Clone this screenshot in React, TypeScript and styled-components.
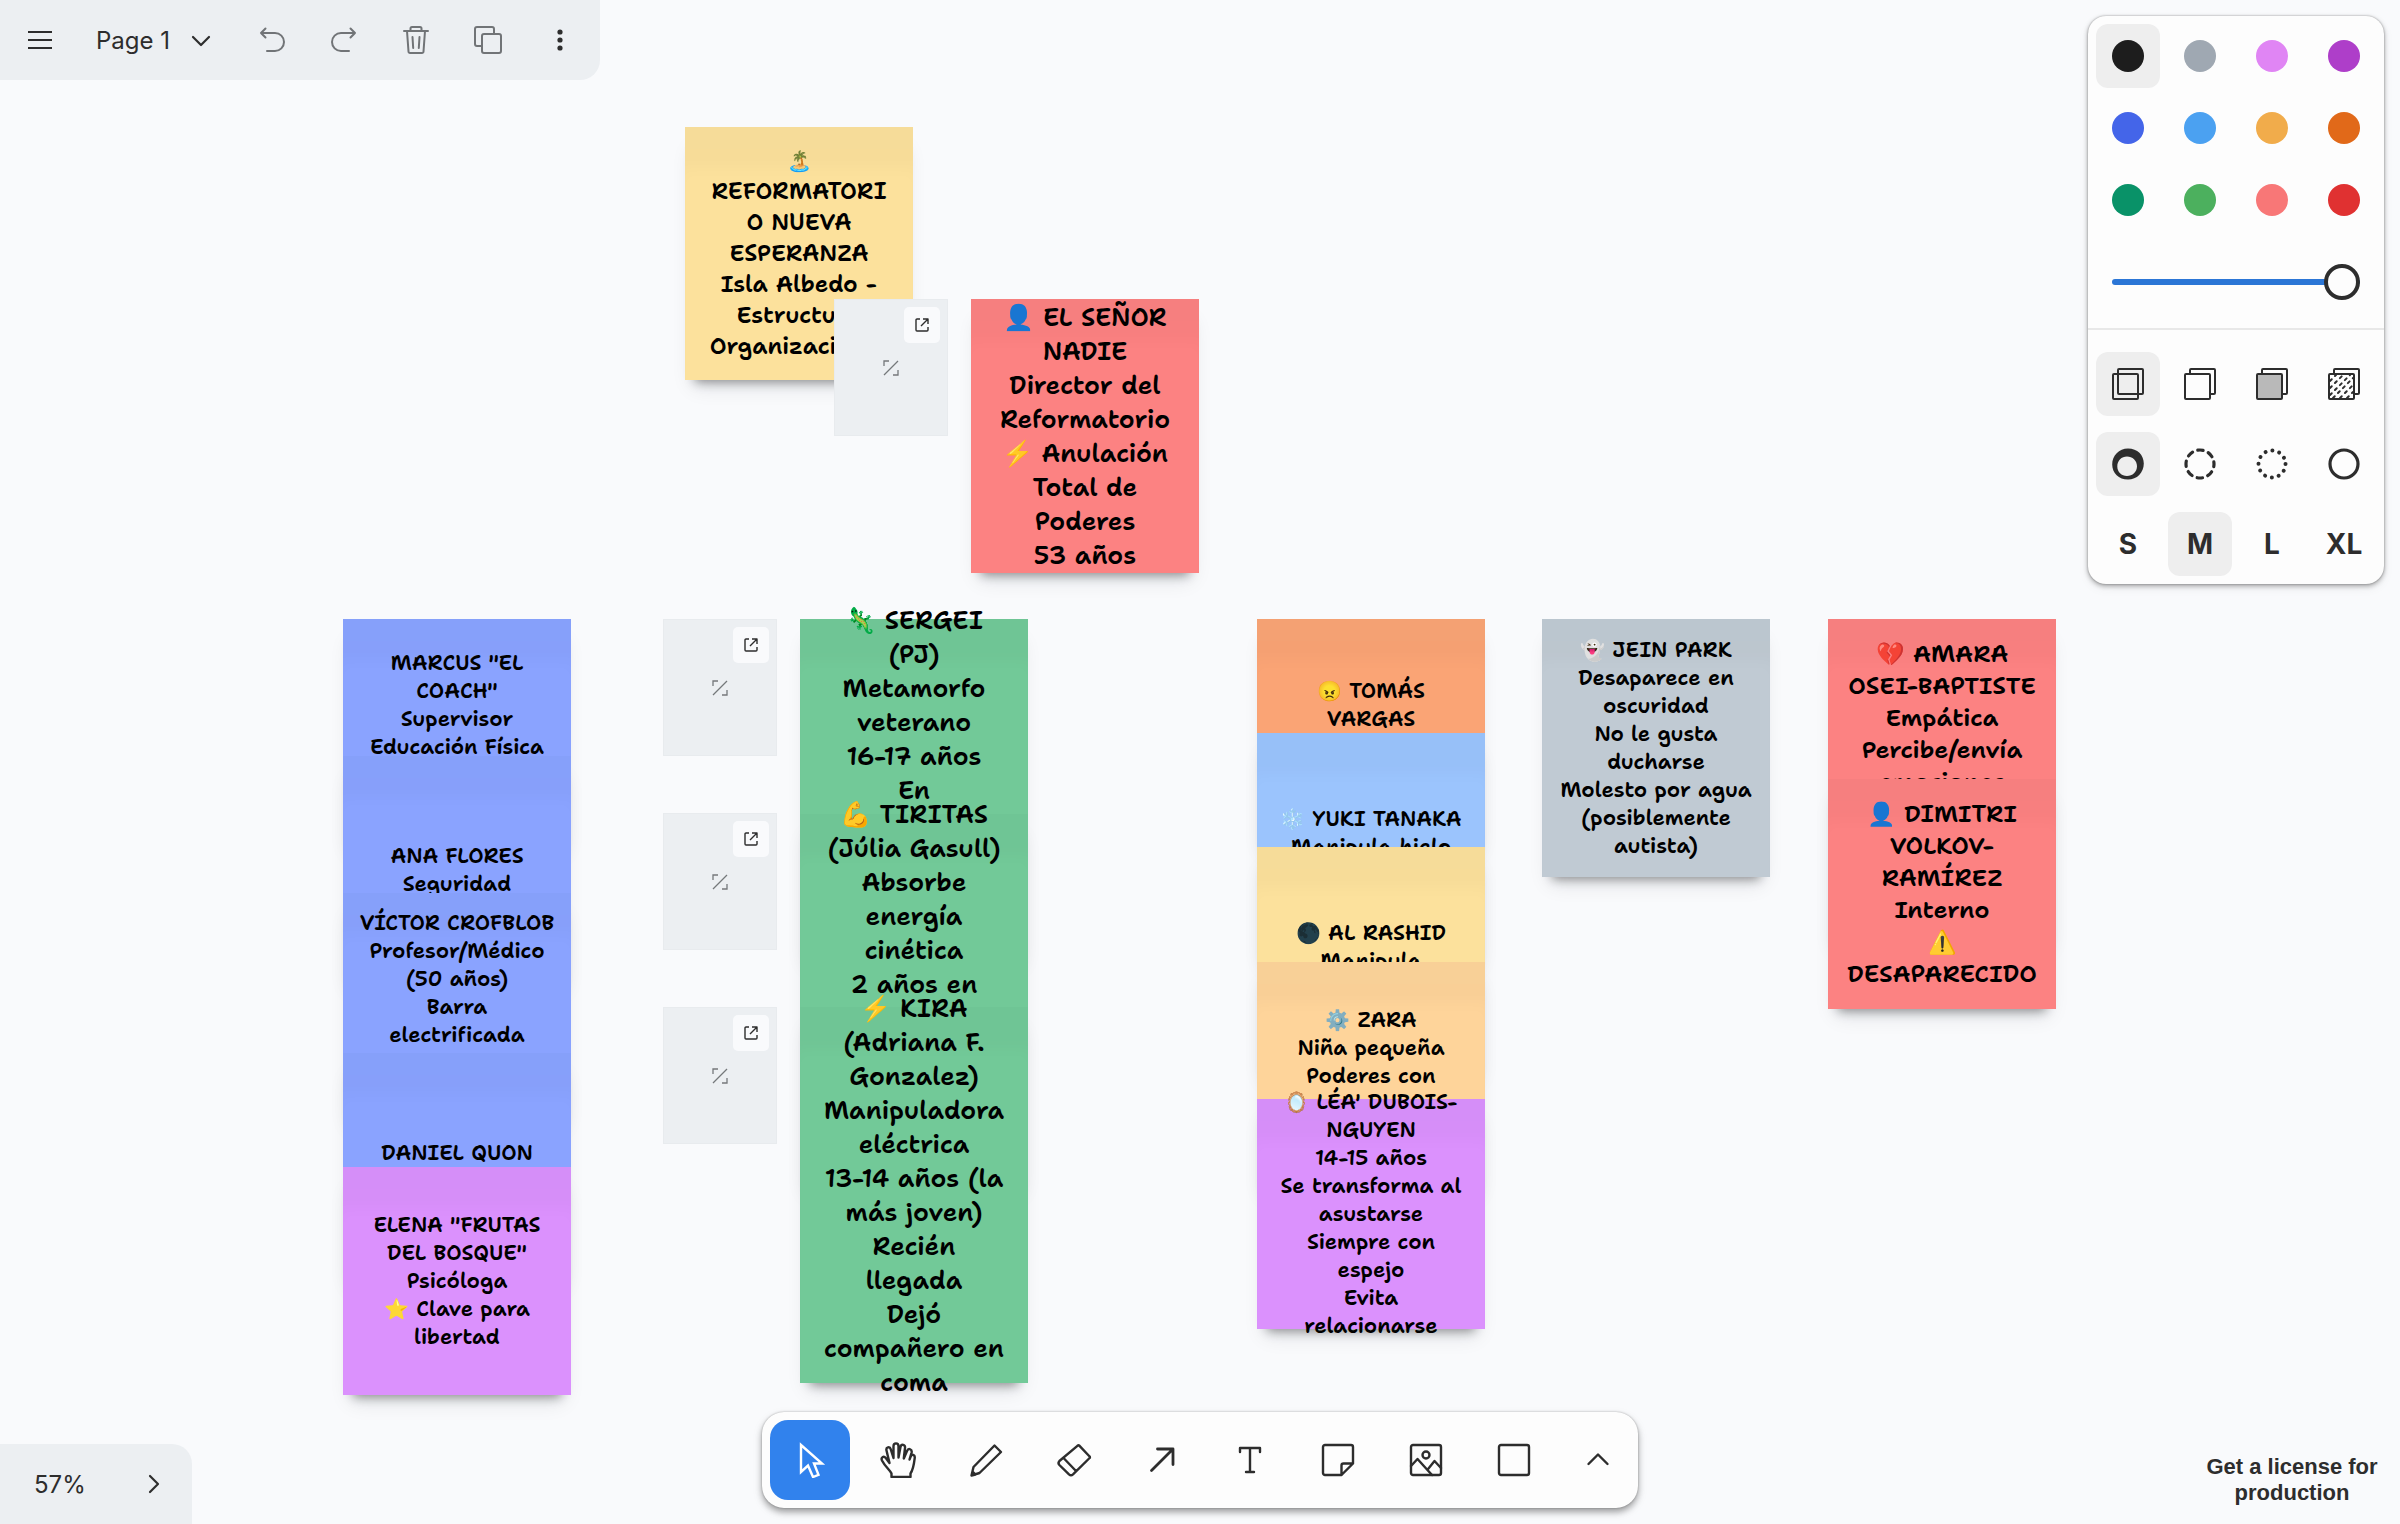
import React from "react";
import styled, { createGlobalStyle } from "styled-components";

const ink = "#2d2d2d";
const lowFill = "#eceff2";
const panelFill = "#fdfdfd";

const GlobalStyle = createGlobalStyle`
  *, *::before, *::after { box-sizing: border-box; }
  body {
    margin: 0;
    background: #f9fafc;
    color: ${ink};
    font-family: Inter, "Liberation Sans", sans-serif;
  }
  button { font: inherit; color: inherit; background: none; border: 0; padding: 0; cursor: pointer; }
`;

const Shell = styled.div`
  display: grid;
  grid-template: 100vh / 100%;
  overflow: hidden;
`;

/* ---------- canvas ---------- */

const Canvas = styled.main`
  grid-area: 1 / 1;
  position: relative;
  overflow: hidden;
`;

type Size = "s" | "m" | "l" | "xl";
const type: Record<Size, { font: number; line: number; emoji: number }> = {
  s: { font: 21, line: 28, emoji: 20 },
  m: { font: 23, line: 31, emoji: 20 },
  l: { font: 24, line: 32, emoji: 23 },
  xl: { font: 25, line: 34, emoji: 25 },
};

const NoteCard = styled.article<{ $x: number; $y: number; $h: number; $fill: string }>`
  position: absolute;
  left: ${(p) => p.$x}px;
  top: ${(p) => p.$y}px;
  width: 228px;
  height: ${(p) => p.$h}px;
  display: flex;
  align-items: center;
  justify-content: center;
  background: ${(p) => p.$fill};
  box-shadow:
    inset 0 48px 16px -7px rgba(15, 23, 44, 0.025),
    0 12px 10px -10px rgba(0, 0, 0, 0.4),
    0 14px 20px -8px rgba(15, 23, 44, 0.12);
`;

const NoteText = styled.p<{ $size: Size; $lines: number }>`
  flex: none;
  margin: 0;
  min-height: ${(p) => p.$lines * type[p.$size].line}px;
  font-family: "Shantell Sans", Inter, sans-serif;
  font-size: ${(p) => type[p.$size].font}px;
  line-height: ${(p) => type[p.$size].line}px;
  font-weight: 600;
  color: #000;
  text-align: center;
  white-space: nowrap;
`;

const Line = styled.span<{ $size: Size }>`
  display: block;
  height: ${(p) => type[p.$size].line}px;
`;

const Emoji = styled.span<{ $size: Size }>`
  font-size: ${(p) => type[p.$size].emoji}px;
  line-height: 1;
`;

interface NoteData {
  x: number;
  y: number;
  h: number;
  fill: string;
  size: Size;
  rows: number;
  text: string[];
}

const blue = "#8aa3ff";
const green = "#72c998";
const violet = "#db91fd";
const red = "#fc8282";
const sand = "#fce19c";

const notes: NoteData[] = [
  { x: 685, y: 127, h: 253, fill: sand, size: "m", rows: 7, text: ["🏝️", "REFORMATORI", "O NUEVA", "ESPERANZA", "Isla Albedo -", "Estructura", "Organizacional"] },
  { x: 971, y: 299, h: 274, fill: red, size: "xl", rows: 8, text: ["👤 EL SEÑOR", "NADIE", "Director del", "Reformatorio", "⚡ Anulación", "Total de", "Poderes", "53 años"] },
  { x: 343, y: 619, h: 228, fill: blue, size: "s", rows: 6, text: ["MARCUS \"EL", "COACH\"", "Supervisor", "Educación Física"] },
  { x: 343, y: 756, h: 228, fill: blue, size: "s", rows: 2, text: ["ANA FLORES", "Seguridad"] },
  { x: 343, y: 893, h: 228, fill: blue, size: "s", rows: 7, text: ["VÍCTOR CROFBLOB", "Profesor/Médico", "(50 años)", "Barra", "electrificada"] },
  { x: 343, y: 1053, h: 228, fill: blue, size: "s", rows: 2, text: ["DANIEL QUON"] },
  { x: 343, y: 1167, h: 228, fill: violet, size: "s", rows: 5, text: ["ELENA \"FRUTAS", "DEL BOSQUE\"", "Psicóloga", "⭐ Clave para", "libertad"] },
  { x: 800, y: 619, h: 341, fill: green, size: "xl", rows: 11, text: ["🦎 SERGEI", "(PJ)", "Metamorfo", "veterano", "16-17 años", "En"] },
  { x: 800, y: 814, h: 374, fill: green, size: "xl", rows: 12, text: ["💪 TIRITAS", "(Júlia Gasull)", "Absorbe", "energía", "cinética", "2 años en"] },
  { x: 800, y: 1007, h: 376, fill: green, size: "xl", rows: 12, text: ["⚡ KIRA", "(Adriana F.", "Gonzalez)", "Manipuladora", "eléctrica", "13-14 años (la", "más joven)", "Recién", "llegada", "Dejó", "compañero en", "coma"] },
  { x: 1257, y: 619, h: 228, fill: "#faa475", size: "s", rows: 4, text: ["😠 TOMÁS", "VARGAS"] },
  { x: 1257, y: 733, h: 228, fill: "#9bc4fd", size: "s", rows: 3, text: ["❄️ YUKI TANAKA", "Manipula hielo"] },
  { x: 1257, y: 847, h: 228, fill: sand, size: "s", rows: 3, text: ["🌑 AL RASHID", "Manipula"] },
  { x: 1257, y: 962, h: 228, fill: "#fed49a", size: "s", rows: 5, text: ["⚙️ ZARA", "Niña pequeña", "Poderes con"] },
  { x: 1257, y: 1099, h: 230, fill: violet, size: "s", rows: 9, text: ["🪞 LÉA' DUBOIS-", "NGUYEN", "14-15 años", "Se transforma al", "asustarse", "Siempre con", "espejo", "Evita", "relacionarse"] },
  { x: 1542, y: 619, h: 258, fill: "#c0cad3", size: "s", rows: 8, text: ["👻 JEIN PARK", "Desaparece en", "oscuridad", "No le gusta", "ducharse", "Molesto por agua", "(posiblemente", "autista)"] },
  { x: 1828, y: 619, h: 325, fill: red, size: "l", rows: 9, text: ["💔 AMARA", "OSEI-BAPTISTE", "Empática", "Percibe/envía", "emociones"] },
  { x: 1828, y: 779, h: 230, fill: red, size: "l", rows: 6, text: ["👤 DIMITRI", "VOLKOV-", "RAMÍREZ", "Interno", "⚠️", "DESAPARECIDO"] },
];

const pictograph = /^(\p{Extended_Pictographic}\uFE0F?)(.*)$/u;

const Note = ({ note }: { note: NoteData }) => (
  <NoteCard $x={note.x} $y={note.y} $h={note.h} $fill={note.fill}>
    <NoteText $size={note.size} $lines={note.rows}>
      {note.text.map((t, i) => {
        const m = t.match(pictograph);
        return (
          <Line key={i} $size={note.size}>
            {m ? <><Emoji $size={note.size}>{m[1]}</Emoji>{m[2]}</> : t}
          </Line>
        );
      })}
    </NoteText>
  </NoteCard>
);

const MediaFrame = styled.figure<{ $x: number; $y: number }>`
  position: absolute;
  left: ${(p) => p.$x}px;
  top: ${(p) => p.$y}px;
  width: 114px;
  height: 137px;
  margin: 0;
  display: grid;
  place-items: center;
  background: ${lowFill};
  border: 1px solid #e8ebee;
  color: #75787b;
`;

const OpenLink = styled.a`
  position: absolute;
  top: 7px;
  right: 7px;
  width: 36px;
  height: 36px;
  display: grid;
  place-items: center;
  border-radius: 5px;
  background: #f9fafc;
  color: ${ink};
`;

const frames = [
  { x: 834, y: 299 },
  { x: 663, y: 619 },
  { x: 663, y: 813 },
  { x: 663, y: 1007 },
];

const Media = ({ x, y }: { x: number; y: number }) => (
  <MediaFrame $x={x} $y={y}>
    <svg width="16" height="16" viewBox="0 0 16 16" fill="none" stroke="currentColor" strokeWidth="1.3">
      <path d="M1 15 15 1M1 6V1h5M15 10v5h-5" />
    </svg>
    <OpenLink href="#" aria-label="Open link">
      <svg width="14" height="14" viewBox="0 0 14 14" fill="none" stroke="currentColor" strokeWidth="1.4" strokeLinejoin="round">
        <path d="M5 1H2a1 1 0 0 0-1 1v10a1 1 0 0 0 1 1h10a1 1 0 0 0 1-1V9M8 1h5v5M13 1 6 8" />
      </svg>
    </OpenLink>
  </MediaFrame>
);

/* ---------- interface over the canvas ---------- */

const Layer = styled.div`
  grid-area: 1 / 1;
  z-index: 1;
  display: flex;
  flex-direction: column;
  justify-content: space-between;
  pointer-events: none;
  & > * > * { pointer-events: auto; }
`;

const TopRow = styled.div`
  display: flex;
  justify-content: space-between;
  align-items: flex-start;
`;

const BottomRow = styled.div`
  display: grid;
  grid-template-columns: 1fr auto 1fr;
  align-items: end;
`;

const MenuBar = styled.nav`
  display: flex;
  padding-right: 4px;
  background: ${lowFill};
  border-radius: 0 0 20px 0;
`;

const BarButton = styled.button<{ $wide?: boolean; $dim?: boolean }>`
  width: ${(p) => (p.$wide ? 80 : 72)}px;
  height: 80px;
  display: grid;
  place-items: center;
  color: ${(p) => (p.$dim ? "#717477" : ink)};
`;

const PageButton = styled.button`
  width: 156px;
  height: 80px;
  padding: 0 24px 0 16px;
  display: flex;
  align-items: center;
  justify-content: space-between;
  font-size: 24px;
  font-weight: 400;
`;

const NavPanel = styled.div`
  justify-self: start;
  width: 192px;
  height: 80px;
  padding: 0 28px 0 34px;
  display: flex;
  align-items: center;
  justify-content: space-between;
  background: ${lowFill};
  border-radius: 0 20px 0 0;
  font-size: 24px;
`;

const NavButton = styled.button`
  height: 80px;
  display: grid;
  place-items: center;
`;

const ToolBar = styled.div`
  display: flex;
  gap: 8px;
  padding: 8px;
  margin-bottom: 16px;
  border-radius: 22px;
  background: ${panelFill};
  box-shadow: 0 0 2px rgba(0, 0, 0, 0.3), 0 4px 6px rgba(0, 0, 0, 0.32), 0 4px 12px rgba(0, 0, 0, 0.08);
`;

const ToolButton = styled.button<{ $active?: boolean; $narrow?: boolean }>`
  width: ${(p) => (p.$narrow ? 68 : 80)}px;
  height: 80px;
  padding-left: ${(p) => (p.$narrow ? 4 : 0)}px;
  display: grid;
  place-items: center;
  border-radius: 18px;
  background: ${(p) => (p.$active ? "#3182ed" : "transparent")};
  color: ${(p) => (p.$active ? "#fff" : ink)};
`;

const License = styled.a`
  justify-self: end;
  width: 180px;
  margin: 0 18px 18px 0;
  font: 700 22px/26px "Liberation Sans", Arial, sans-serif;
  color: ${ink};
  text-align: center;
  text-decoration: none;
`;

/* ---------- style panel ---------- */

const StylePanel = styled.form`
  width: 296px;
  margin: 16px 16px 0 0;
  border-radius: 18px;
  background: ${panelFill};
  box-shadow: 0 0 2px rgba(0, 0, 0, 0.35), 0 2px 5px rgba(0, 0, 0, 0.32), 0 4px 12px rgba(0, 0, 0, 0.06);
`;

const Section = styled.div<{ $spaced?: boolean }>`
  padding: ${(p) => (p.$spaced ? "22px 8px 8px" : "8px 8px 0")};
  border-top: ${(p) => (p.$spaced ? "2px solid #e8e8e8" : "0")};
  display: grid;
  gap: ${(p) => (p.$spaced ? 16 : 8)}px;
`;

const Options = styled.div`
  display: grid;
  grid-template-columns: repeat(4, 64px);
  gap: 8px;
`;

const Option = styled.label`
  position: relative;
  height: 64px;
  display: grid;
  place-items: center;
  border-radius: 12px;
  font-size: 28px;
  font-weight: 700;
  cursor: pointer;
  &:has(input:checked) { background: #eeeeee; }
`;

const HiddenRadio = styled.input`
  position: absolute;
  inset: 0;
  width: 100%;
  height: 100%;
  margin: 0;
  opacity: 0;
`;

const Dot = styled.span<{ $c: string }>`
  width: 32px;
  height: 32px;
  border-radius: 50%;
  background: ${(p) => p.$c};
`;

const SliderRow = styled.div`
  display: grid;
  align-items: center;
  height: 88px;
  padding: 0 16px 4px;
`;

const Slider = styled.input`
  appearance: none;
  width: 100%;
  height: 36px;
  margin: 0;
  background: transparent;
  &::-webkit-slider-runnable-track {
    height: 6px;
    border-radius: 3px;
    background: #2b76d6;
  }
  &::-webkit-slider-thumb {
    appearance: none;
    width: 36px;
    height: 36px;
    margin-top: -15px;
    border: 4px solid ${ink};
    border-radius: 50%;
    background: ${panelFill};
  }
`;

const colors: [string, string][] = [
  ["Black", "#1d1d1d"], ["Grey", "#9fa8b2"], ["Light violet", "#e085f4"], ["Violet", "#ae3ec9"],
  ["Blue", "#4465e9"], ["Light blue", "#4ba1f1"], ["Yellow", "#f1ac4b"], ["Orange", "#e16919"],
  ["Green", "#099268"], ["Light green", "#4cb05e"], ["Light red", "#f87777"], ["Red", "#e03131"],
];

const Icon = ({ children, size = 36, w = 2.4 }: { children: React.ReactNode; size?: number; w?: number }) => (
  <svg width={size} height={size} viewBox={`0 0 ${size} ${size}`} fill="none" stroke="currentColor" strokeWidth={w} strokeLinecap="round" strokeLinejoin="round">
    {children}
  </svg>
);

const BackSquare = () => <path d="M8 8V4a1 1 0 0 1 1-1h23a1 1 0 0 1 1 1v23a1 1 0 0 1-1 1h-4" />;
const FrontSquare = ({ fill = "none" }: { fill?: string }) => <rect x="3" y="8" width="25" height="25" rx="1" fill={fill} />;

const fills: [string, React.ReactNode][] = [
  ["No fill", <Icon w={2}><rect x="8" y="3" width="25" height="25" rx="1" /><FrontSquare /></Icon>],
  ["Semi fill", <Icon w={2}><BackSquare /><FrontSquare /></Icon>],
  ["Solid fill", <Icon w={2}><BackSquare /><FrontSquare fill="#b9b9b9" /></Icon>],
  ["Pattern fill", (
    <Icon w={2}>
      <BackSquare />
      <FrontSquare />
      <path strokeDasharray="2.500 4.500" d="m4 15 6-6M4 22 17 9M4 29 24 9M7 32l20-20M14 32l13-13M21 32l6-6" />
    </Icon>
  )],
];

const dashes: [string, React.ReactNode][] = [
  ["Draw", <Icon><path fill="currentColor" stroke="none" fillRule="evenodd" d="M18 2.4C27.500 2.400 33.800 9 33.800 17.500 33.800 26.500 27 33.600 18 33.600 8.800 33.600 2.200 27 2.200 18.500 2.200 9.500 9 2.400 18 2.400ZM17 10.500C11.500 10.500 7.300 14.500 7.300 20.500 7.300 26 11.500 30 17 30 22.500 30 27 26 27 20.300 27 14.500 22.500 10.500 17 10.500Z" /></Icon>],
  ["Dashed", <Icon w={3.2}><circle cx="18" cy="18" r="14" strokeDasharray="5.500 5.500" strokeDashoffset="2.750" /></Icon>],
  ["Dotted", <Icon w={4}><circle cx="18" cy="18" r="13.500" strokeDasharray="0.010 7.060" /></Icon>],
  ["Solid", <Icon w={3.2}><circle cx="18" cy="18" r="14" /></Icon>],
];

interface GroupProps {
  name: string;
  items: [string, React.ReactNode][];
  selected: number;
}

const OptionGroup = ({ name, items, selected }: GroupProps) => (
  <Options role="radiogroup" aria-label={name}>
    {items.map(([label, node], i) => (
      <Option key={label}>
        <HiddenRadio type="radio" name={name} aria-label={label} defaultChecked={i === selected} />
        {node}
      </Option>
    ))}
  </Options>
);

const tools: [string, React.ReactNode][] = [
  ["Select", <Icon><path strokeLinejoin="miter" d="M9 3v27l7-6.500L21 35l5.500-2.200L22 21.500h8Z" /></Icon>],
  ["Hand", <Icon><path d="M11.500 35v-3.500C10 28 5 24.500 2 18.500 .6 15.500 3.600 13.500 5.800 16L9.500 21 6.500 8.500C5.700 5 9.800 4 10.800 7.300L13.500 16V4.300C13.500 .4 18.500 .4 18.500 4.300V15.500L20.500 5C21.300 1.500 25.500 2.400 25 6L23.800 16.500 27 9C28.500 5.600 32.300 7.200 31.600 10.600L29.500 17.500 30.500 15C32 11.500 35.200 12.800 34.700 16 34 22 33.500 27 30.500 31.500V35Z" /></Icon>],
  ["Draw", <Icon><path d="M26.500 3.500 33 10 11.500 31 3.500 33.500 5.500 25ZM3.500 33.500l1-4 3 3Z" /></Icon>],
  ["Eraser", <Icon><path d="M21.700 3.700a1 1 0 0 1 1.600 0L33.600 14.500a1 1 0 0 1 0 1.500L17 32.400a3 3 0 0 1-4 0L3.400 23a3 3 0 0 1 0-4ZM8 16.500 20 29" /></Icon>],
  ["Arrow", <Icon w={2.8}><path d="M7.500 28.500 29 7M13.500 7H29v15.500" /></Icon>],
  ["Text", <Icon><path d="M8 10V6h20v4M18 6v24M14 30h8" /></Icon>],
  ["Note", <Icon><path d="M5 3h26a2 2 0 0 1 2 2v16.500L21.500 33H5a2 2 0 0 1-2-2V5a2 2 0 0 1 2-2ZM21.500 33V23.500a2 2 0 0 1 2-2H33" /></Icon>],
  ["Asset", <Icon><rect x="3" y="3" width="30" height="30" rx="2" /><circle cx="18" cy="13" r="3.500" /><path d="m3 24 6.500-7L24 33M20.500 26.500 26.500 19 33 26" /></Icon>],
  ["Rectangle", <Icon><rect x="3" y="3" width="30" height="30" rx="2" /></Icon>],
];

export default function App() {
  return (
    <>
      <GlobalStyle />
      <Shell>
        <Canvas>
          {notes.map((n, i) => (
            <Note key={i} note={n} />
          ))}
          {frames.map((f, i) => (
            <Media key={i} x={f.x} y={f.y} />
          ))}
        </Canvas>
        <Layer>
          <TopRow>
            <MenuBar aria-label="Main">
              <BarButton $wide aria-label="Menu">
                <Icon w={2}><path strokeLinecap="butt" d="M6 10h24M6 18h24M6 26h24" /></Icon>
              </BarButton>
              <PageButton>
                Page 1
                <Icon size={22} w={2.2}><path d="m3 8 8 8 8-8" /></Icon>
              </PageButton>
              <BarButton $dim aria-label="Undo">
                <Icon w={2}><path d="M13 29h8a9 9 0 0 0 0-18H7M11.500 6.500 7 11l4.500 4.500" /></Icon>
              </BarButton>
              <BarButton $dim aria-label="Redo">
                <Icon w={2}><path d="M23 29h-8a9 9 0 0 1 0-18H29M24.500 6.500 29 11l-4.500 4.500" /></Icon>
              </BarButton>
              <BarButton $dim aria-label="Delete">
                <Icon w={2}><path d="M6 9h24M12.500 9V6.500a1.500 1.500 0 0 1 1.500-1.500h8a1.500 1.500 0 0 1 1.500 1.500V9M9 9l1.500 20.500a1.500 1.500 0 0 0 1.500 1.500h12a1.500 1.500 0 0 0 1.500-1.500L27 9M14.500 15l.700 11M21.500 15l-.700 11" /></Icon>
              </BarButton>
              <BarButton $dim aria-label="Duplicate">
                <Icon w={2}><rect x="12" y="12" width="19" height="19" rx="2" /><path d="M12 24H7a2 2 0 0 1-2-2V7a2 2 0 0 1 2-2h15a2 2 0 0 1 2 2v5" /></Icon>
              </BarButton>
              <BarButton aria-label="Actions">
                <Icon><g fill="currentColor" stroke="none"><circle cx="18" cy="10" r="2.600" /><circle cx="18" cy="18" r="2.600" /><circle cx="18" cy="26" r="2.600" /></g></Icon>
              </BarButton>
            </MenuBar>
            <StylePanel aria-label="Styles">
              <Section>
                <OptionGroup name="Color" selected={0} items={colors.map(([n, c]) => [n, <Dot $c={c} />])} />
                <SliderRow>
                  <Slider type="range" min={0} max={4} defaultValue={4} aria-label="Opacity" />
                </SliderRow>
              </Section>
              <Section $spaced>
                <OptionGroup name="Fill" selected={0} items={fills} />
                <OptionGroup name="Dash" selected={0} items={dashes} />
                <OptionGroup name="Size" selected={1} items={[["Small", "S"], ["Medium", "M"], ["Large", "L"], ["Extra large", "XL"]]} />
              </Section>
            </StylePanel>
          </TopRow>
          <BottomRow>
            <NavPanel>
              57%
              <NavButton aria-label="Toggle minimap">
                <Icon size={20} w={2.2}><path d="m6 2 8 8-8 8" /></Icon>
              </NavButton>
            </NavPanel>
            <ToolBar role="toolbar" aria-label="Tools">
              {tools.map(([label, icon], i) => (
                <ToolButton key={label} $active={i === 0} aria-label={label}>
                  {icon}
                </ToolButton>
              ))}
              <ToolButton $narrow aria-label="More">
                <Icon size={24}><path d="m2.500 16 9.500-9.500L21.500 16" /></Icon>
              </ToolButton>
            </ToolBar>
            <License href="#">Get a license for production</License>
          </BottomRow>
        </Layer>
      </Shell>
    </>
  );
}
